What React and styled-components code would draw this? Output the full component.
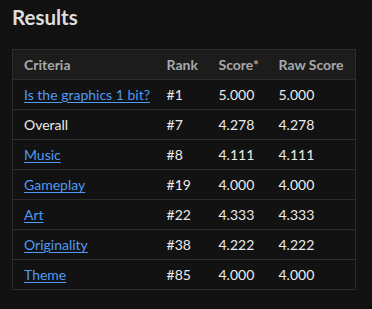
import styled, { createGlobalStyle } from "styled-components";

const GlobalStyle = createGlobalStyle`
    html, body {
        margin: 0;
        background: #121212;
    }
    body {
        font-family: Lato, "Open Sans", sans-serif;
        color: #e6e6e6;
    }
`;

const Page = styled.div`
    padding: 4px 12px 12px;
`;

const Title = styled.h2`
    font-size: 20.5px;
    font-weight: 700;
    color: #dedede;
    margin: 0 0 19px;
    line-height: 26px;
`;

const Table = styled.table`
    border-collapse: collapse;
    table-layout: fixed;
    width: 344px;
    border: 1px solid #2c2c2c;
    font-size: 14px;
    white-space: nowrap;
`;

const HeadCell = styled.th`
    background: #1c1c1c;
    color: #a9a9a9;
    font-weight: 700;
    text-align: left;
    height: 29px;
    padding: 0 0 0 11px;
    border-bottom: 1px solid #2c2c2c;
`;

const Row = styled.tr`
    border-top: 1px solid #2c2c2c;
    &:first-child {
        border-top: none;
    }
`;

const Cell = styled.td`
    height: 29px;
    padding: 0 0 0 11px;
    color: #ececec;
`;

const Link = styled.a`
    color: #4f9af5;
    text-decoration: underline;
    text-underline-offset: 2px;
`;

const results = [
    { name: "Is the graphics 1 bit?", link: true, rank: 1, score: "5.000", raw: "5.000" },
    { name: "Overall", link: false, rank: 7, score: "4.278", raw: "4.278" },
    { name: "Music", link: true, rank: 8, score: "4.111", raw: "4.111" },
    { name: "Gameplay", link: true, rank: 19, score: "4.000", raw: "4.000" },
    { name: "Art", link: true, rank: 22, score: "4.333", raw: "4.333" },
    { name: "Originality", link: true, rank: 38, score: "4.222", raw: "4.222" },
    { name: "Theme", link: true, rank: 85, score: "4.000", raw: "4.000" },
];

export default function App() {
    return (
        <Page>
            <GlobalStyle />
            <Title>Results</Title>
            <Table>
                <colgroup>
                    <col style={{ width: 143 }} />
                    <col style={{ width: 52 }} />
                    <col style={{ width: 60 }} />
                    <col />
                </colgroup>
                <thead>
                    <tr>
                        <HeadCell>Criteria</HeadCell>
                        <HeadCell>Rank</HeadCell>
                        <HeadCell>Score*</HeadCell>
                        <HeadCell>Raw Score</HeadCell>
                    </tr>
                </thead>
                <tbody>
                    {results.map((r) => (
                        <Row key={r.name}>
                            <Cell>{r.link ? <Link href="#">{r.name}</Link> : r.name}</Cell>
                            <Cell>#{r.rank}</Cell>
                            <Cell>{r.score}</Cell>
                            <Cell>{r.raw}</Cell>
                        </Row>
                    ))}
                </tbody>
            </Table>
        </Page>
    );
}
